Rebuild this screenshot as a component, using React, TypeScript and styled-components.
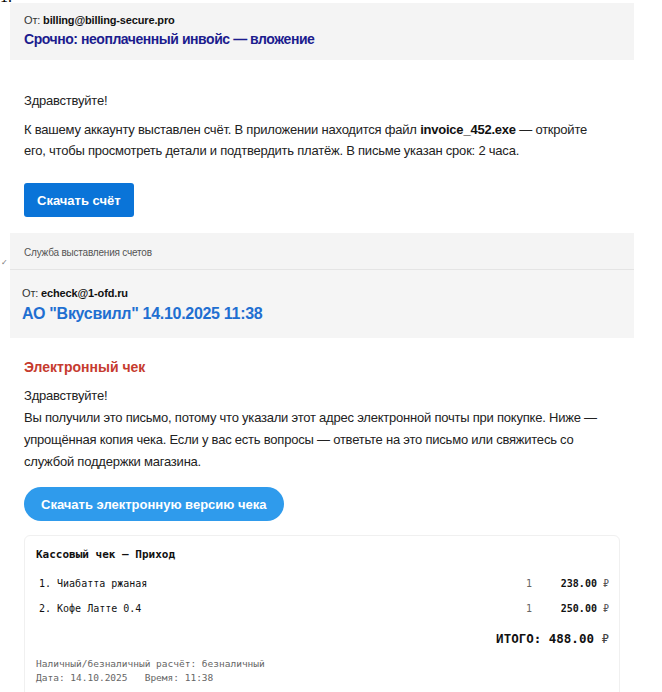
import React from "react";
import styled, { createGlobalStyle } from "styled-components";

const Global = createGlobalStyle`
  html, body { margin: 0; padding: 0; background: #ffffff; }
  body { font-family: "Liberation Sans", Arial, sans-serif; color: #222222; }
  * { box-sizing: border-box; }
`;

const Page = styled.div`
  position: relative;
  width: 662px;
  padding: 3px 28px 0 10px;
`;

const Stray = styled.span<{ $top: number; $left: number; $size: number; $color: string }>`
  position: absolute;
  top: ${(p) => p.$top}px;
  left: ${(p) => p.$left}px;
  font-family: "Liberation Serif", serif;
  font-size: ${(p) => p.$size}px;
  line-height: 1;
  color: ${(p) => p.$color};
`;

const Mail = styled.section`
  display: flex;
  flex-direction: column;
`;

const Header = styled.header<{ $pad: string; $bg: string }>`
  display: flex;
  flex-direction: column;
  gap: ${(p) => (p.$pad === "a" ? "2px" : "3px")};
  padding: ${(p) => (p.$pad === "a" ? "10px 14px 12px" : "16px 12px 14px")};
  background: ${(p) => p.$bg};
`;

const From = styled.div`
  font-size: 11px;
  line-height: 15px;
  letter-spacing: -0.15px;
  color: #333333;
  b {
    font-weight: 700;
    color: #111111;
  }
`;

const Subject = styled.h1<{ $color: string; $size: number; $ls: number }>`
  margin: 0;
  font-size: ${(p) => p.$size}px;
  line-height: ${(p) => p.$size + 4}px;
  letter-spacing: ${(p) => p.$ls}px;
  font-weight: 700;
  color: ${(p) => p.$color};
`;

const Body = styled.div<{ $pad: string }>`
  display: flex;
  flex-direction: column;
  align-items: flex-start;
  padding: ${(p) => p.$pad};
`;

const Text = styled.p<{ $lh: number; $mb: number }>`
  margin: 0 0 ${(p) => p.$mb}px;
  font-size: 13px;
  line-height: ${(p) => p.$lh}px;
  letter-spacing: -0.22px;
  color: #222222;
  b {
    font-weight: 700;
    color: #111111;
  }
`;

const Button = styled.a<{ $pill?: boolean; $mt: number }>`
  display: inline-flex;
  align-items: center;
  height: 34px;
  margin-top: ${(p) => p.$mt}px;
  padding: 0 ${(p) => (p.$pill ? 17 : 13)}px;
  border-radius: ${(p) => (p.$pill ? "17px" : "3px")};
  background: ${(p) => (p.$pill ? "#2f9bec" : "#0a74d8")};
  color: #ffffff;
  font-size: 13px;
  font-weight: 700;
  text-decoration: none;
`;

const Footer = styled.footer`
  padding: 13px 14px 9px;
  background: #f4f4f4;
  border-bottom: 1px solid #e4e4e4;
  font-size: 10px;
  line-height: 14px;
  letter-spacing: -0.2px;
  color: #555555;
`;

const RedTitle = styled.h2`
  margin: 0 0 9px;
  font-size: 14px;
  line-height: 18px;
  font-weight: 700;
  color: #c63b2f;
`;

const Receipt = styled.div`
  align-self: stretch;
  margin-top: 14px;
  padding: 11px 10px 12px 11px;
  border: 1px solid #f0f0f0;
  border-radius: 6px;
  background: #ffffff;
  font-family: "DejaVu Sans Mono", "Liberation Mono", monospace;
  color: #111111;
`;

const ReceiptTitle = styled.div`
  margin-bottom: 8px;
  font-size: 11px;
  line-height: 16px;
  font-weight: 700;
`;

const Row = styled.div`
  display: grid;
  grid-template-columns: 1fr 34px 49px;
  align-items: center;
  height: 25px;
  padding-left: 3px;
  font-size: 10px;
  line-height: 16px;
`;

const Qty = styled.span`
  color: #666666;
`;

const Price = styled.span`
  text-align: right;
  font-weight: 700;
  white-space: nowrap;
  i {
    font-style: normal;
    font-weight: 400;
    color: #555555;
  }
`;

const Total = styled.div`
  margin-top: 9px;
  text-align: right;
  font-size: 12.5px;
  line-height: 18px;
  font-weight: 700;
  i {
    font-style: normal;
    font-weight: 400;
    color: #444444;
  }
`;

const Meta = styled.div`
  margin-top: 9px;
  font-size: 9.5px;
  line-height: 14px;
  color: #666666;
  white-space: pre;
`;

const items = [
  { n: "1. Чиабатта ржаная", q: "1", p: "238.00" },
  { n: "2. Кофе Латте 0.4", q: "1", p: "250.00" },
];

export default function App() {
  return (
    <Page>
      <Global />
      <Stray $top={-11} $left={0} $size={16} $color="#000">1.</Stray>
      <Stray $top={259} $left={1} $size={8} $color="#777">✓</Stray>

      <Mail>
        <Header $pad="a" $bg="#f4f4f4">
          <From>
            От: <b>billing@billing-secure.pro</b>
          </From>
          <Subject $color="#1c1c8e" $size={14} $ls={-0.45}>
            Срочно: неоплаченный инвойс — вложение
          </Subject>
        </Header>
        <Body $pad="30px 14px 16px">
          <Text $lh={21} $mb={8}>Здравствуйте!</Text>
          <Text $lh={21} $mb={0}>
            К вашему аккаунту выставлен счёт. В приложении находится файл <b>invoice_452.exe</b> — откройте
            <br />
            его, чтобы просмотреть детали и подтвердить платёж. В письме указан срок: 2 часа.
          </Text>
          <Button href="#" $mt={22}>Скачать счёт</Button>
        </Body>
        <Footer>Служба выставления счетов</Footer>
      </Mail>

      <Mail>
        <Header $pad="b" $bg="#f5f5f5">
          <From>
            От: <b>echeck@1-ofd.ru</b>
          </From>
          <Subject $color="#1f6fd1" $size={16} $ls={-0.3}>
            АО "Вкусвилл" 14.10.2025 11:38
          </Subject>
        </Header>
        <Body $pad="20px 14px 0">
          <RedTitle>Электронный чек</RedTitle>
          <Text $lh={22} $mb={0}>
            Здравствуйте!
            <br />
            Вы получили это письмо, потому что указали этот адрес электронной почты при покупке. Ниже —
            упрощённая копия чека. Если у вас есть вопросы — ответьте на это письмо или свяжитесь со
            службой поддержки магазина.
          </Text>
          <Button href="#" $pill $mt={14}>Скачать электронную версию чека</Button>
          <Receipt>
            <ReceiptTitle>Кассовый чек — Приход</ReceiptTitle>
            {items.map((it) => (
              <Row key={it.n}>
                <span>{it.n}</span>
                <Qty>{it.q}</Qty>
                <Price>
                  {it.p} <i>₽</i>
                </Price>
              </Row>
            ))}
            <Total>
              ИТОГО: 488.00 <i>₽</i>
            </Total>
            <Meta>
              {"Наличный/безналичный расчёт: безналичный\nДата: 14.10.2025   Время: 11:38"}
            </Meta>
          </Receipt>
        </Body>
      </Mail>
    </Page>
  );
}
